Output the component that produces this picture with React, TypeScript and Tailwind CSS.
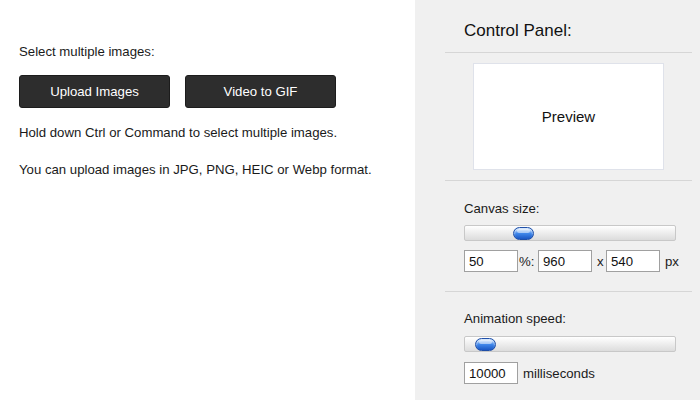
import React from 'react';

const Slider = ({ pos }: { pos: number }) => (
  <div className="relative h-[16px] w-[212px] rounded-[2px] border border-[#c8c8c8] bg-linear-to-b from-[#ffffff] to-[#dcdcdc]">
    <div
      className="absolute top-[1px] h-[13px] w-[21px] rounded-full border border-[#1f4fa8] bg-linear-to-b from-[#a9cdf9] via-[#3f86ea] to-[#1a56c4] shadow-[inset_0_2px_2px_rgba(255,255,255,0.6)]"
      style={{ left: pos }}
    >
      <div className="mx-auto mt-[1px] h-[4px] w-[13px] rounded-full bg-white/50" />
    </div>
  </div>
);

const NumInput = ({ value, className = '' }: { value: string; className?: string }) => (
  <input
    type="text"
    defaultValue={value}
    className={`h-[22px] w-[54px] border border-[#a0a0a0] bg-white px-[4px] text-[13.2px] text-[#111] outline-none ${className}`}
  />
);

export default function App() {
  return (
    <div className="flex h-[400px] w-[700px] overflow-hidden font-['Liberation_Sans',Arial,sans-serif] text-[13.2px] leading-[15px] text-[#1a1a1a]">
      {/* left side */}
      <div className="w-[415px] bg-white pl-[19px] pt-[44px]">
        <p>Select multiple images:</p>
        <div className="mt-[16px] flex gap-[15px]">
          <button className="h-[33px] w-[151px] rounded-[3px] border border-[#1c1c1c] bg-[#2d2d2d] text-[13.2px] text-white">
            Upload Images
          </button>
          <button className="h-[33px] w-[151px] rounded-[3px] border border-[#1c1c1c] bg-[#2d2d2d] text-[13.2px] text-white">
            Video to GIF
          </button>
        </div>
        <p className="mt-[17px]">Hold down Ctrl or Command to select multiple images.</p>
        <p className="mt-[22px]">You can upload images in JPG, PNG, HEIC or Webp format.</p>
      </div>

      {/* control panel */}
      <div className="flex-1 bg-[#f0f0f0] pl-[30px] pr-[8px]">
        <div className="h-[53px] border-b border-[#d6d6d6] pl-[19px] pt-[21px]">
          <h2 className="text-[17px] leading-[20px] text-[#111]">Control Panel:</h2>
        </div>

        <div className="h-[128px] border-b border-[#d6d6d6] pt-[10px]">
          <div className="mx-auto flex h-[107px] w-[191px] items-center justify-center border border-[#dfe2ea] bg-white text-[15px] text-[#111]">
            Preview
          </div>
        </div>

        <div className="border-b border-[#d6d6d6] pb-[19px] pl-[19px] pt-[20px]">
          <p>Canvas size:</p>
          <div className="mt-[9px]">
            <Slider pos={48} />
          </div>
          <div className="mt-[9px] flex items-center">
            <NumInput value="50" />
            <span className="ml-[1px] w-[19px]">%:</span>
            <NumInput value="960" />
            <span className="ml-[5px] w-[9px]">x</span>
            <NumInput value="540" className="w-[53px]" />
            <span className="ml-[5px]">px</span>
          </div>
        </div>

        <div className="pl-[19px] pt-[19px]">
          <p>Animation speed:</p>
          <div className="mt-[10px]">
            <Slider pos={10} />
          </div>
          <div className="mt-[10px] flex items-center">
            <NumInput value="10000" className="h-[21px]" />
            <span className="ml-[5px]">milliseconds</span>
          </div>
        </div>
      </div>
    </div>
  );
}
